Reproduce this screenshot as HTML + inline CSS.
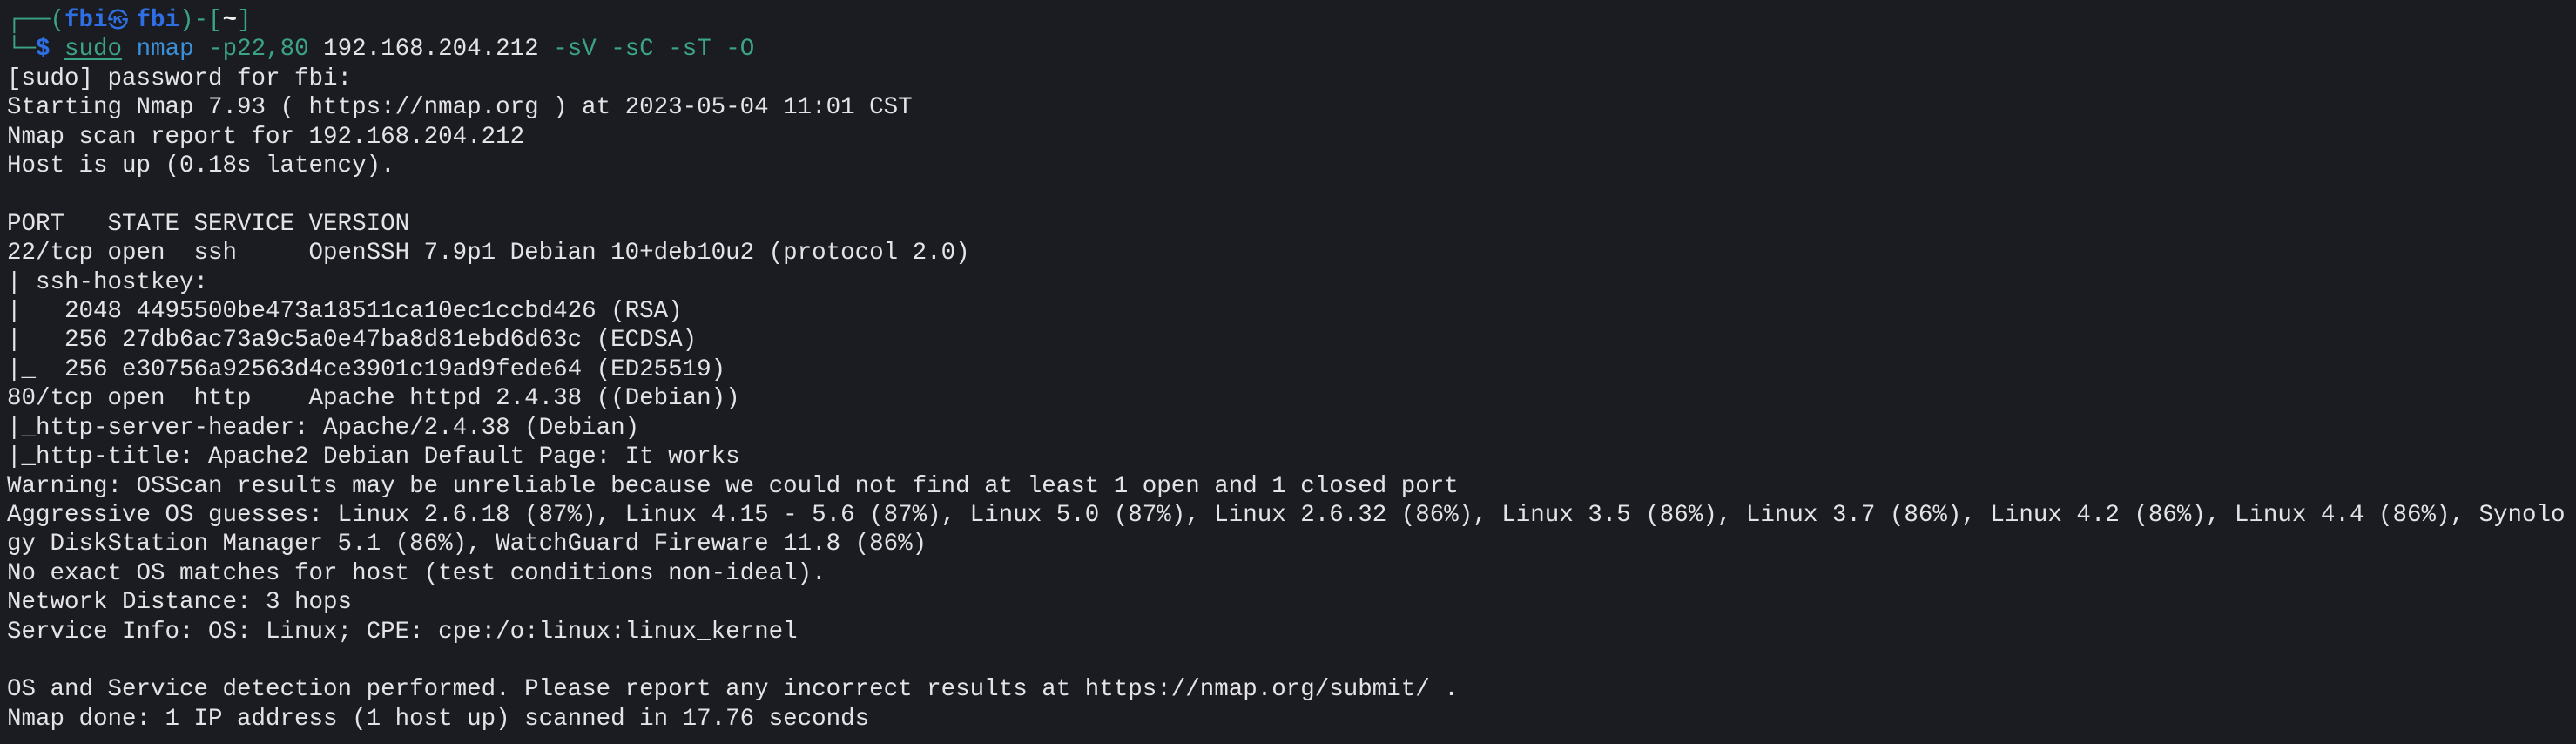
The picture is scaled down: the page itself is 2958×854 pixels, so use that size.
<!DOCTYPE html>
<html><head><meta charset="utf-8"><style>
html,body{margin:0;padding:0;background:#1b1c22;width:2958px;height:854px;overflow:hidden}
pre{margin:0;padding:7px 0 0 8px;font-family:"Liberation Mono","DejaVu Sans Mono",monospace;font-size:27.5px;line-height:33.4px;color:#e4e4e6;white-space:pre}
.g{color:#3ba386}.b{color:#2e6fe3;font-weight:bold}.n{color:#3a8fd6}.w{color:#f0f0f0;font-weight:bold}
.u{color:#3ba386;text-decoration:underline;text-underline-offset:4px}
.k{display:inline-block;width:33px;text-align:left;font-size:24px;font-weight:normal;font-family:"DejaVu Sans","Noto Sans CJK JP",sans-serif;vertical-align:top}
</style></head><body><pre><span class="g">┌──(</span><span class="b">fbi<span class="k">㉿</span>fbi</span><span class="g">)-[</span><span class="w">~</span><span class="g">]</span>
<span class="g">└─</span><span class="b">$</span> <span class="u">sudo</span> <span class="n">nmap</span> <span class="g">-p22,80</span> 192.168.204.212 <span class="g">-sV -sC -sT -O</span>
[sudo] password for fbi:
Starting Nmap 7.93 ( https://nmap.org ) at 2023-05-04 11:01 CST
Nmap scan report for 192.168.204.212
Host is up (0.18s latency).

PORT   STATE SERVICE VERSION
22/tcp open  ssh     OpenSSH 7.9p1 Debian 10+deb10u2 (protocol 2.0)
| ssh-hostkey:
|   2048 4495500be473a18511ca10ec1ccbd426 (RSA)
|   256 27db6ac73a9c5a0e47ba8d81ebd6d63c (ECDSA)
|_  256 e30756a92563d4ce3901c19ad9fede64 (ED25519)
80/tcp open  http    Apache httpd 2.4.38 ((Debian))
|_http-server-header: Apache/2.4.38 (Debian)
|_http-title: Apache2 Debian Default Page: It works
Warning: OSScan results may be unreliable because we could not find at least 1 open and 1 closed port
Aggressive OS guesses: Linux 2.6.18 (87%), Linux 4.15 - 5.6 (87%), Linux 5.0 (87%), Linux 2.6.32 (86%), Linux 3.5 (86%), Linux 3.7 (86%), Linux 4.2 (86%), Linux 4.4 (86%), Synolo
gy DiskStation Manager 5.1 (86%), WatchGuard Fireware 11.8 (86%)
No exact OS matches for host (test conditions non-ideal).
Network Distance: 3 hops
Service Info: OS: Linux; CPE: cpe:/o:linux:linux_kernel

OS and Service detection performed. Please report any incorrect results at https://nmap.org/submit/ .
Nmap done: 1 IP address (1 host up) scanned in 17.76 seconds</pre></body></html>
